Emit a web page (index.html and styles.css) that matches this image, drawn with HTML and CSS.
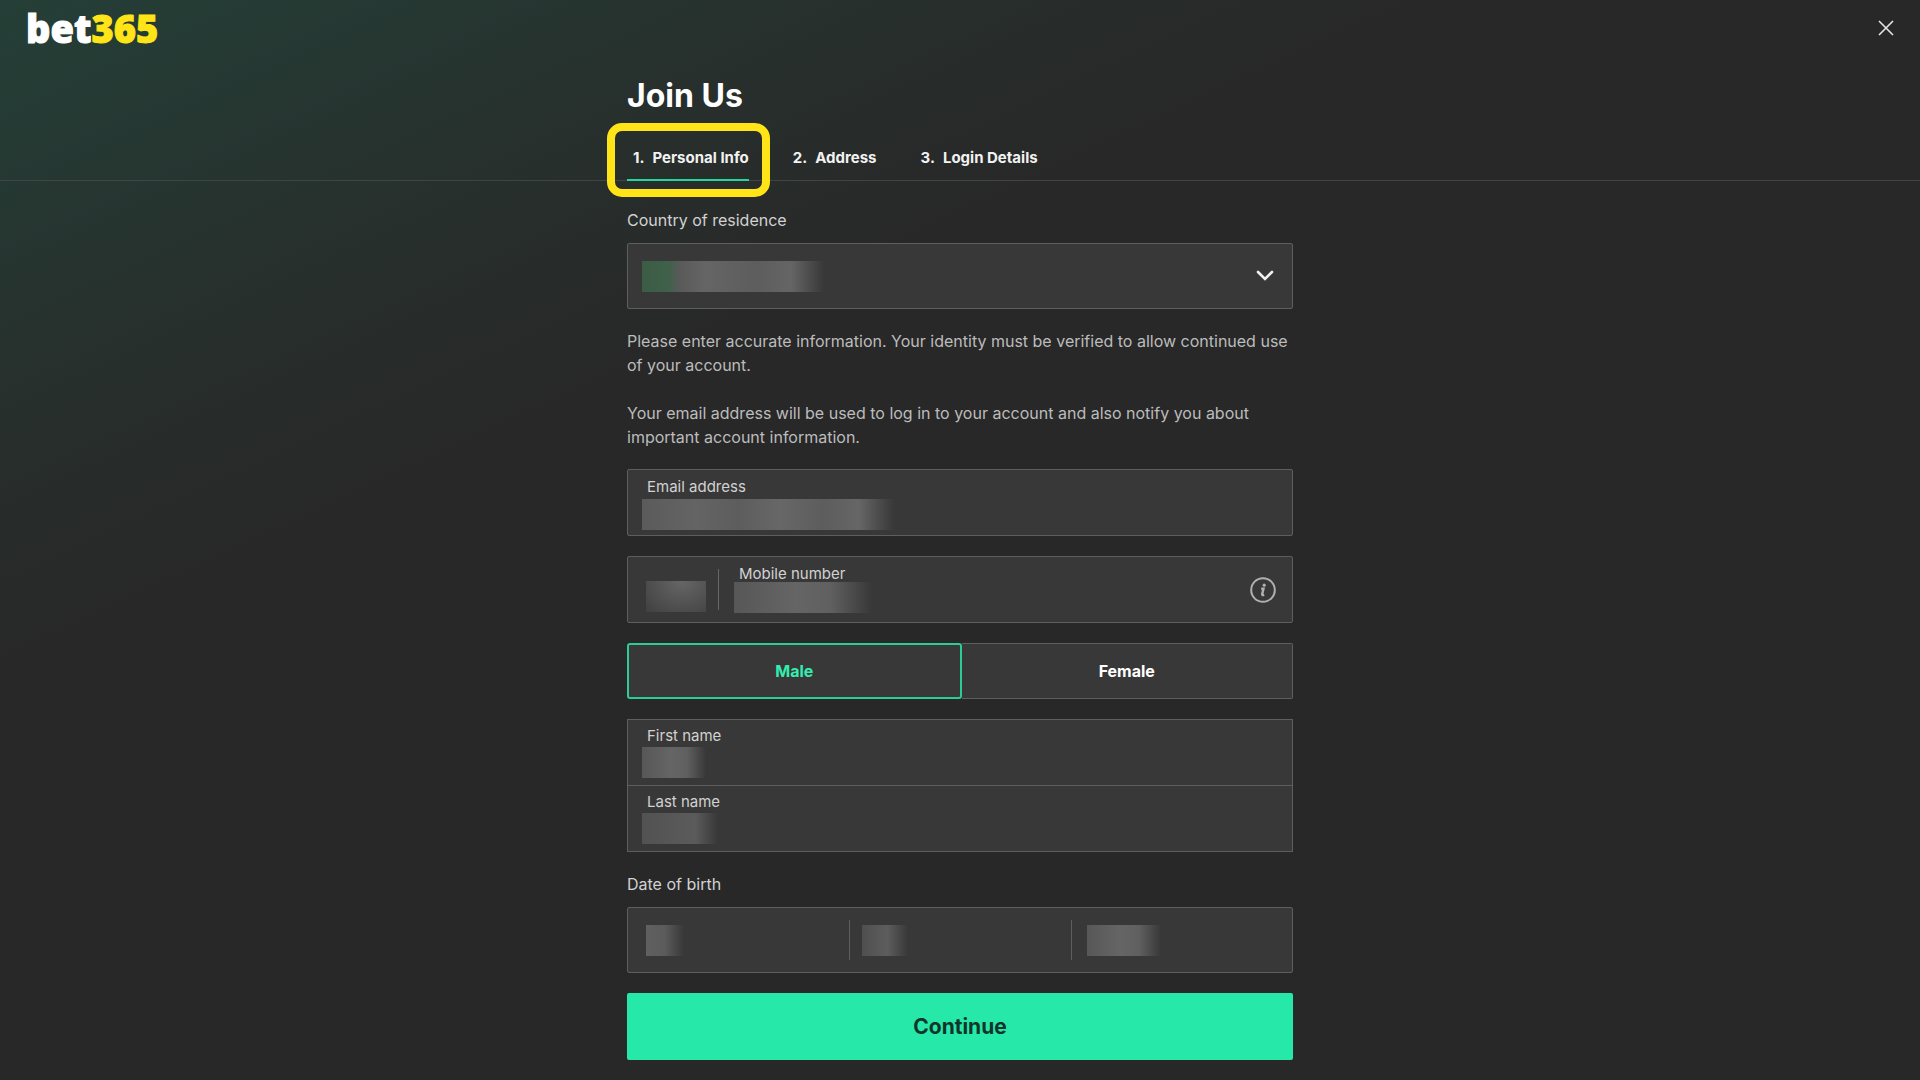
FILE: index.html
```html
<!DOCTYPE html>
<html lang="en">
<head>
	<meta charset="UTF-8">
	<meta name="viewport" content="width=device-width, initial-scale=1">
	<title>Join Us</title>
	<link rel="stylesheet" href="styles.css">
</head>
<body>
	<header class="header">
		<a class="logo" href="#">bet<span class="logo-num">365</span></a>
		<button class="close" type="button" aria-label="Close">
			<svg width="16" height="16" viewBox="0 0 16 16"><path d="M1 1l14 14M15 1L1 15" fill="none" stroke="#e4e4e4" stroke-width="1.6"/></svg>
		</button>
	</header>

	<div class="top">
		<div class="container">
			<h1 class="title">Join Us</h1>
			<nav class="steps">
				<a class="step active" href="#"><span>1.</span><span>Personal Info</span></a>
				<a class="step" href="#"><span>2.</span><span>Address</span></a>
				<a class="step" href="#"><span>3.</span><span>Login Details</span></a>
			</nav>
		</div>
	</div>

	<main class="container">
		<form action="#" method="get">
			<label class="label label-country" for="country">Country of residence</label>
			<div class="box country">
				<select class="value value-country" id="country" name="country">
					<option value=""></option>
				</select>
				<svg class="chevron" width="18" height="12" viewBox="0 0 18 12"><path d="M2 2l7 7 7-7" fill="none" stroke="#f0f0f0" stroke-width="2.6" stroke-linecap="round"/></svg>
			</div>

			<div class="intro">
				<p>Please enter accurate information. Your identity must be verified to allow continued use of your account.</p>
				<p>Your email address will be used to log in to your account and also notify you about important account information.</p>
			</div>

			<div class="box field">
				<label for="email">Email address</label>
				<input class="value value-email" type="email" id="email" name="email">
			</div>

			<div class="box phone">
				<input class="value value-code" type="text" id="code" name="code" aria-label="Country code">
				<div class="phone-number">
					<label for="mobile">Mobile number</label>
					<input class="value value-mobile" type="tel" id="mobile" name="mobile">
				</div>
				<button class="info" type="button" aria-label="More information">
					<svg width="26" height="26" viewBox="0 0 26 26" fill="none" stroke="#b0b0b0">
						<circle cx="13" cy="13" r="11.8" stroke-width="2"/>
						<path d="M11.2 11.8h2.3l-1.3 5.2c-.2 1.1.6 1.4 2 .9" stroke-width="2.4"/>
						<circle cx="14.2" cy="8.2" r="1.6" fill="#b0b0b0" stroke="none"/>
					</svg>
				</button>
			</div>

			<div class="gender">
				<button class="gender-btn selected" type="button">Male</button>
				<button class="gender-btn" type="button">Female</button>
			</div>

			<div class="names">
				<div class="box field">
					<label for="first">First name</label>
					<input class="value value-first" type="text" id="first" name="first">
				</div>
				<div class="box field">
					<label for="last">Last name</label>
					<input class="value value-last" type="text" id="last" name="last">
				</div>
			</div>

			<label class="label" for="day">Date of birth</label>
			<div class="box dob">
				<div class="dob-part"><input class="value value-day" type="text" id="day" name="day"></div>
				<div class="dob-part"><input class="value value-month" type="text" name="month" aria-label="Month"></div>
				<div class="dob-part"><input class="value value-year" type="text" name="year" aria-label="Year"></div>
			</div>

			<button class="continue" type="submit">Continue</button>
		</form>
	</main>
</body>
</html>
```

FILE: styles.css
```css
* {
	box-sizing: border-box;
}
body {
	margin: 0;
	min-height: 100vh;
	padding-bottom: 16px;
	font-family: Inter, "Liberation Sans", sans-serif;
	font-size: 16px;
	line-height: 24px;
	color: #d2d2d2;
	background: #282828 linear-gradient(155deg, #243f37 0, #27312e 330px, #282828 600px) no-repeat;
}
button, input, select {
	font: inherit;
	color: inherit;
}
button {
	cursor: pointer;
}
p, h1 {
	margin: 0;
}

/* header */
.header {
	display: flex;
	justify-content: space-between;
	align-items: center;
	height: 56px;
	padding: 0 24px 0 26px;
}
.logo {
	font-family: "Noto Sans", "Open Sans", sans-serif;
	font-size: 38px;
	font-weight: 900;
	line-height: 56px;
	color: #fff;
	text-decoration: none;
	-webkit-text-stroke: 1px currentColor;
}
.logo-num {
	color: #ffe418;
}
.close {
	display: flex;
	padding: 2px;
	border: 0;
	background: none;
}

.container {
	max-width: 666px;
	margin: 0 auto;
}

/* title and steps */
.top {
	border-bottom: 1px solid #424443;
}
.title {
	padding-top: 20px;
	font-size: 32px;
	font-weight: 700;
	line-height: 40px;
	color: #fff;
}
.steps {
	display: flex;
	gap: 38px;
	padding-top: 22px;
}
.step {
	display: flex;
	gap: 8px;
	height: 42px;
	padding: 8px 0 0 6px;
	font-size: 15px;
	font-weight: 700;
	color: #f2f2f2;
	text-decoration: none;
}
.step.active {
	position: relative;
	height: 43px;
	margin-bottom: -1px;
	border-bottom: 2px solid #24d69b;
}
.step.active::after {
	content: "";
	position: absolute;
	inset: -15px -21px -18px -20px;
	border: 8px solid #ffe418;
	border-radius: 15px;
}

/* form */
.label {
	display: block;
	margin: 20px 0 11px;
}
.label-country {
	margin-top: 27px;
}
.box {
	height: 67px;
	border: 1px solid #5e5e5e;
	border-radius: 2px;
	background: #383838;
}
.intro {
	display: grid;
	gap: 24px;
	margin: 20px 0;
	color: #bcbcbc;
}
.field {
	padding: 5px 14px 0;
}
.field label {
	display: block;
	padding-left: 5px;
	font-size: 15px;
}
.value {
	display: block;
	width: 100%;
	height: 31px;
	padding: 0 8px;
	border: 0;
	outline: 0;
	appearance: none;
	background: linear-gradient(to right, #575757, #656565 45%, #606060 70%, transparent) no-repeat;
}
.country {
	display: flex;
	align-items: center;
	height: 66px;
	padding: 0 18px 0 14px;
}
.value-country {
	background-image: linear-gradient(to right, #3c5d45, #3f6049 14%, #5a5a5a 21%, #656565 35%, #5d5d5d 63%, #656565 82%, transparent);
	background-size: 182px 100%;
}
.chevron {
	flex: none;
}
.value-email {
	background-image: linear-gradient(to right, #5b5b5b, #646464 22%, #5d5d5d 38%, #676767 55%, #5d5d5d 72%, #666 86%, transparent);
	background-size: 252px 100%;
}
.value-first {
	background-size: 64px 100%;
}
.value-last {
	background-image: linear-gradient(to right, #525252, #5b5b5b 70%, transparent);
	background-size: 76px 100%;
}

.phone {
	display: flex;
	align-items: center;
	margin: 20px 0;
	padding: 0 16px 0 18px;
}
.value-code {
	width: 60px;
	margin-top: 14px;
	background: radial-gradient(ellipse at 60% 0, #666, #404040);
}
.phone-number {
	flex: 1;
	align-self: stretch;
	position: relative;
	margin-left: 12px;
	padding: 5px 0 0 16px;
}
.phone-number label {
	display: block;
	height: 20px;
	padding-left: 5px;
	font-size: 15px;
}
.phone-number::before {
	content: "";
	position: absolute;
	left: 0;
	top: 12px;
	bottom: 12px;
	border-left: 1px solid #666;
}
.value-mobile {
	background-size: 138px 100%;
}
.info {
	display: flex;
	padding: 0;
	border: 0;
	background: none;
}

.gender {
	display: flex;
	margin-bottom: 20px;
}
.gender-btn {
	flex: 1;
	height: 56px;
	border: 1px solid #5e5e5e;
	border-left: 0;
	border-radius: 0 2px 2px 0;
	background: #383838;
	font-weight: 700;
	color: #fff;
}
.gender-btn.selected {
	border: 2px solid #2bcc98;
	border-radius: 3px;
	color: #35edb0;
}

.names .box + .box {
	margin-top: -1px;
}
.names .field {
	border-radius: 0;
}
.names label {
	line-height: 22px;
}

.dob {
	display: grid;
	grid-template-columns: repeat(3, 1fr);
	height: 66px;
	padding: 12px 0;
}
.dob-part {
	padding: 5px 14px 0 12px;
}
.dob-part:first-child {
	padding-left: 18px;
}
.dob-part:last-child {
	padding-left: 15px;
}
.dob-part + .dob-part {
	border-left: 1px solid #5e5e5e;
}
.value-day {
	background-image: linear-gradient(to right, #606060, #5b5b5b 50%, transparent);
	background-size: 38px 100%;
}
.value-month {
	background-image: linear-gradient(to right, #4f4f4f, #5d5d5d 55%, transparent);
	background-size: 46px 100%;
}
.value-year {
	background-size: 74px 100%;
}

.continue {
	display: block;
	width: 100%;
	height: 67px;
	margin-top: 20px;
	border: 0;
	border-radius: 2px;
	background: #26e8a9;
	font-size: 21px;
	font-weight: 700;
	color: #10352a;
}
```
